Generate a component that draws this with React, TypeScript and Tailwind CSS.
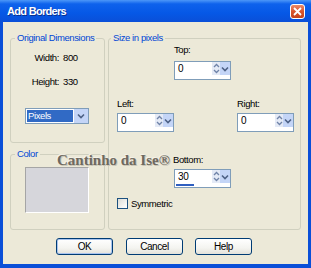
import React from 'react';

function Chevron() {
  return (
    <svg width="8" height="6" viewBox="0 0 8 6">
      <path d="M1 1.5 L4 4.5 L7 1.5" fill="none" stroke="#4D6185" strokeWidth="1.6" />
    </svg>
  );
}

function UpDown() {
  return (
    <svg width="7" height="11" viewBox="0 0 7 11">
      <path d="M1 4 L3.5 1.5 L6 4 M1 7 L3.5 9.5 L6 7" fill="none" stroke="#6F83A8" strokeWidth="1.3" />
    </svg>
  );
}

function Spin({ value, filled = false }: { value: string; filled?: boolean }) {
  return (
    <div className="flex h-[19px] w-[57px] flex-col border border-[#7F9DB9] bg-white">
      <div className="flex h-[13px]">
        <span className="flex-1 pl-[3px] text-[10px] leading-[13px]">{value}</span>
        <div className="flex w-[8px] items-center justify-center bg-[#E4EAF6]">
          <UpDown />
        </div>
        <div className="flex w-[10px] items-center justify-center bg-[#C4D5F7]">
          <Chevron />
        </div>
      </div>
      <div className="h-[4px] pl-[1px] pt-[1px]">
        {filled && <div className="h-[2px] w-[18px] bg-[#2F5FC0]" />}
      </div>
    </div>
  );
}

function XpButton({ label, primary = false }: { label: string; primary?: boolean }) {
  return (
    <button
      className={
        primary
          ? 'h-[17px] w-[57px] rounded-[3px] border border-[#003C74] bg-[linear-gradient(to_bottom,#FFFFFF,#F4F4F0_60%,#E3E2DA)] text-[10px] leading-[15px] text-black shadow-[inset_0_0_0_1px_#A9C4EF]'
          : 'h-[17px] w-[57px] rounded-[3px] border border-[#003C74] bg-[linear-gradient(to_bottom,#FFFFFF,#F4F4F0_60%,#E3E2DA)] text-[10px] leading-[15px] text-black'
      }
    >
      {label}
    </button>
  );
}

export default function App() {
  return (
    <div className="relative flex h-[268px] w-[311px] flex-col overflow-hidden whitespace-nowrap bg-[#0A4FD8] font-['Liberation_Sans',Arial,sans-serif] text-[9.5px] tracking-[-0.4px] text-black">
      <div className="flex h-[22px] items-center bg-[linear-gradient(to_bottom,#4C97F8_0%,#0E62EC_18%,#0658E6_60%,#0A4FD8_100%)] pl-[7px]">
        <span className="text-[11px] font-bold tracking-[-0.7px] text-white [text-shadow:1px_1px_0_#0A2F8F]">Add Borders</span>
        <div className="ml-auto mr-[6px] flex h-[15px] w-[15px] items-center justify-center rounded-[3px] border border-white bg-[linear-gradient(to_bottom,#EB8A68,#D9552E_50%,#C4421C)]">
          <svg width="9" height="9" viewBox="0 0 9 9">
            <path d="M1 1 L8 8 M8 1 L1 8" stroke="white" strokeWidth="1.8" />
          </svg>
        </div>
      </div>

      <div className="mx-[3px] mb-[4px] flex h-[242px] flex-col bg-[#ECE9D8]">
        <div className="flex gap-[3px] pl-[7px] pt-[10px]">
          <div className="flex w-[95px] flex-col">
            <fieldset className="h-[111px] rounded-[3px] border border-[#D0D0BF]">
              <legend className="ml-[4px] px-[2px] leading-[12px] text-[#0046D5]">Original Dimensions</legend>
              <div className="mt-[8px] flex leading-[12px]">
                <span className="w-[48px] text-right">Width:</span>
                <span className="ml-[4px]">800</span>
              </div>
              <div className="mt-[12px] flex leading-[12px]">
                <span className="w-[48px] text-right">Height:</span>
                <span className="ml-[4px]">330</span>
              </div>
              <div className="ml-[14px] mt-[20px] flex h-[16px] w-[64px] border border-[#7F9DB9] bg-white">
                <span className="m-[1px] flex-1 bg-[#316AC5] pl-[1px] leading-[12px] text-white">Pixels</span>
                <div className="flex w-[14px] items-center justify-center bg-[#C4D5F7]">
                  <Chevron />
                </div>
              </div>
            </fieldset>
            <fieldset className="mt-[5px] h-[82px] rounded-[3px] border border-[#D0D0BF]">
              <legend className="ml-[4px] px-[2px] leading-[12px] text-[#0046D5]">Color</legend>
              <div className="ml-[14px] mt-[7px] h-[46px] w-[64px] border border-[#A5A5A5] border-b-white border-r-white bg-[#D6D6DB]" />
            </fieldset>
          </div>

          <fieldset className="h-[198px] w-[193px] rounded-[3px] border border-[#D0D0BF]">
            <legend className="ml-[2px] px-[2px] leading-[12px] text-[#0046D5]">Size in pixels</legend>
            <div className="ml-[65px] leading-[12px]">Top:</div>
            <div className="ml-[65px] mt-[5px]">
              <Spin value="0" />
            </div>
            <div className="mt-[18px] flex pl-[8px] leading-[12px]">
              <span className="w-[120px]">Left:</span>
              <span>Right:</span>
            </div>
            <div className="mt-[3px] flex pl-[8px]">
              <div className="w-[120px]">
                <Spin value="0" />
              </div>
              <Spin value="0" />
            </div>
            <div className="ml-[64px] mt-[22px] leading-[12px]">Bottom:</div>
            <div className="ml-[65px] mt-[3px]">
              <Spin value="30" filled />
            </div>
            <div className="ml-[8px] mt-[10px] flex items-center gap-[3px]">
              <div className="h-[11px] w-[11px] border border-[#1C5180] bg-[linear-gradient(135deg,#DCDCD7,#F6F6F3_70%,#FFFFFF)]" />
              <span className="leading-[11px]">Symmetric</span>
            </div>
          </fieldset>
        </div>

        <div className="mt-[8px] flex pl-[53px]">
          <XpButton label="OK" primary />
          <div className="ml-[13px]">
            <XpButton label="Cancel" />
          </div>
          <div className="ml-[12px]">
            <XpButton label="Help" />
          </div>
        </div>
      </div>

      <div className="pointer-events-none absolute left-[57px] top-[149px] font-['Liberation_Serif',serif] text-[15px] font-bold tracking-[0px] text-[#6E695F] [text-shadow:1px_1px_0_#C9C5B6,-1px_-1px_0_#F5F3EA]">
        Cantinho da Ise®
      </div>
    </div>
  );
}
